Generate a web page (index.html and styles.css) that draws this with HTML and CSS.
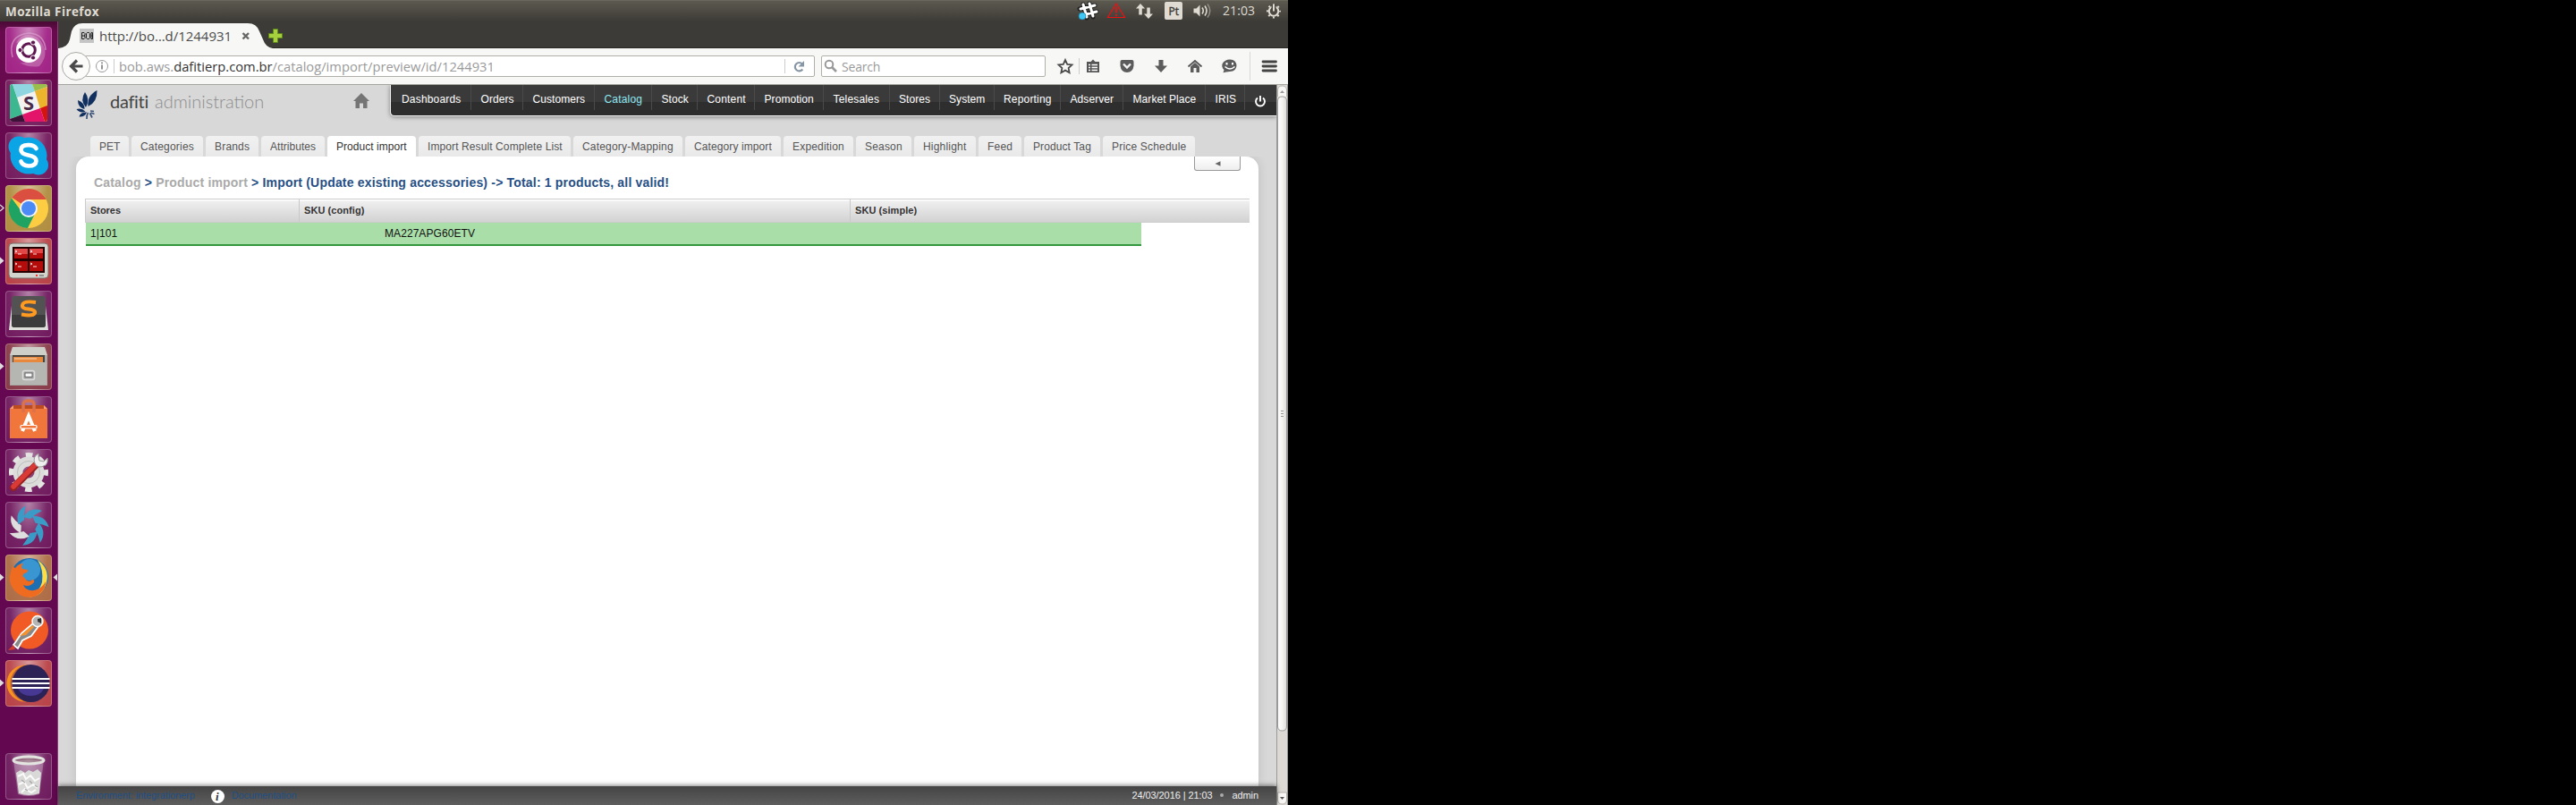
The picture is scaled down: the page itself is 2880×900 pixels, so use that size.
FILE: index.html
```html
<!DOCTYPE html>
<html lang="en">
<head>
<meta charset="utf-8">
<title>Mozilla Firefox</title>
<link rel="stylesheet" href="styles.css">
</head>
<body>
<div class="desktop">
<header class="panel">
  <span class="panel-title">Mozilla Firefox</span>
  <svg class="indicators" width="240" height="24" viewBox="1200 0 240 24">
    <g stroke="#222" stroke-width="5" stroke-linecap="round"><path d="M1211 5l4 15M1218 4l4 15M1207 10l17-4M1209 17l17-4"/></g>
    <g stroke="#fff" stroke-width="3" stroke-linecap="round"><path d="M1211 5l4 14M1218 4l4 14M1208 10l16-4M1210 17l16-4"/></g>
    <circle cx="1210" cy="18" r="4" fill="#3fc8f4" stroke="#1b6f8f" stroke-width=".6"/>
    <path d="M1248 4l9.500 15.500h-19z" fill="none" stroke="#ee1111" stroke-width="1.200"/><path d="M1248 8v6.500M1248 16v2" stroke="#ee1111" stroke-width="1.800"/>
    <path d="M1275 4l-5 5.500h3.300v7h3.500v-7h3.300zM1284 21l-5-5.500h3.300v-7h3.500v7h3.200z" fill="#dfdbd2"/>
    <rect x="1302" y="2" width="20" height="20" rx="2" fill="#dfdbd2"/>
    <text x="1306.500" y="17" class="kbd">Pt</text>
    <path d="M1334.500 9.500h3l4-4v13l-4-4h-3z" fill="#dfdbd2"/>
    <path d="M1344 8.500q2.500 3.500 0 7M1347 6.500q4 5.500 0 11" fill="none" stroke="#dfdbd2" stroke-width="1.600"/><path d="M1350 4.500q5.500 7.500 0 15" fill="none" stroke="#8f8c85" stroke-width="1.500"/>
    <text x="1367" y="17" class="clock" textLength="36">21:03</text>
    <circle cx="1424" cy="12.500" r="5.200" fill="none" stroke="#dfdbd2" stroke-width="2"/>
    <circle cx="1424" cy="12.500" r="7" fill="none" stroke="#dfdbd2" stroke-width="2" stroke-dasharray="2 3.498" stroke-dashoffset="1"/>
    <path d="M1424 4.500v8" stroke="#47453f" stroke-width="5"/><path d="M1424 4.500v8" stroke="#dfdbd2" stroke-width="2"/>
  </svg>
</header>
<div class="screen">
<nav class="launcher">
  <div class="tile t-dash"><svg viewBox="0 0 52 52"><path d="M8 34Q2 10 26 7Q44 8 45 26" fill="none" stroke="#d9a3cb" stroke-opacity=".7" stroke-width="1.500"/><path d="M12 18Q20 4 36 12Q52 28 38 44Q26 46 16 40Q32 42 38 30Q40 12 12 18z" fill="#e6bddb" opacity=".35"/><circle cx="26" cy="26" r="14" fill="#fff"/><circle cx="26" cy="26" r="7.300" fill="none" stroke="#5e1750" stroke-width="3"/><g fill="#5e1750" stroke="#fff"><circle cx="16.500" cy="26" r="2.600"/><circle cx="31" cy="17.500" r="2.600"/><circle cx="31" cy="34.500" r="2.600"/></g></svg></div>
  <div class="tile"><svg viewBox="0 0 52 52"><clipPath id="sl"><rect x="5" y="5" width="42" height="42" rx="3"/></clipPath><g clip-path="url(#sl)"><rect x="5" y="5" width="42" height="42" fill="#f4f2f0"/><path d="M5 5h3l5 15 6 19-14 5z" fill="#3db790"/><path d="M8 5h22l3 8-20 7z" fill="#8fd6e0"/><path d="M30 5h17v3l-14 5z" fill="#9bbd4c"/><path d="M33 13l14-5v22l-8 3z" fill="#ecb32d"/><path d="M19 39l20-7 5 15H22z" fill="#e3156b"/><path d="M39 32l8-3v18h-3z" fill="#d4140f"/><path d="M5 44l14-5 3 8H5z" fill="#3c1238"/></g><text x="26" y="34" class="slack-s">S</text></svg></div>
  <div class="tile"><svg viewBox="0 0 52 52"><g fill="#0ba5e6"><circle cx="15" cy="16" r="11.500"/><circle cx="37" cy="36.500" r="11"/><circle cx="26" cy="26" r="20.500"/></g><path d="M34.500 18Q32 14 25.500 14.200Q17.500 14.500 17.500 19.500Q17.500 24 25.500 25.500Q34.500 27 34.500 32Q34 37.500 26 37.500Q19 37 17.500 32.500" fill="none" stroke="#fff" stroke-width="4.700" stroke-linecap="round"/></svg></div>
  <div class="tile t-chrome"><svg viewBox="0 0 52 52"><circle cx="26" cy="26" r="22" fill="#fccd43"/><path d="M26 26L7.500 14A22 22 0 0 1 45.500 16H26z" fill="#db4f40"/><path d="M7 14.500A22 22 0 0 0 25 48L34 30 26 26 17 28z" fill="#1ea362"/><circle cx="26" cy="26" r="10" fill="#f4f4f4"/><circle cx="26" cy="26" r="8" fill="#4c8bf5"/></svg></div>
  <div class="tile t-red"><svg viewBox="0 0 52 52"><rect x="4" y="6" width="44" height="39" rx="4" fill="#d3d3cd" stroke="#77716b"/><rect x="8" y="10" width="36" height="29" fill="#240000"/><path d="M10 12h15v11H10zM27 12h15v11H27zM10 26h15v11H10zM27 26h15v11H27z" fill="#b40b0b"/><path d="M10 12h15v6H10zM27 12h15v5H27z" fill="#e24747"/><path d="M11 14l2 1-2 1M14 18h4M28 14l2 1-2 1M31 18h4M11 28l2 1-2 1M14 32h4M28 28l2 1-2 1M31 32h4" fill="none" stroke="#fff" stroke-width=".9"/><circle cx="35" cy="42" r="1" fill="red"/><path d="M38 42h5" stroke="#555"/></svg></div>
  <div class="tile"><svg viewBox="0 0 52 52"><path d="M8 8h36l4 36H4z" fill="#dededa"/><rect x="7" y="6" width="38" height="35" rx="3" fill="#525252"/><path d="M7 27h38v11q0 3-3 3H10q-3 0-3-3z" fill="#3c3c3c"/><path d="M34 13Q20 11 19 16Q18 20 26 20.500Q34 21.500 33 25Q31 29 18 26.500" fill="none" stroke="#ff9a20" stroke-width="4"/></svg></div>
  <div class="tile t-files"><svg viewBox="0 0 52 52"><path d="M8 4h36l3 9v34H5V13z" fill="#cfcfca"/><path d="M5 13h42v34H5z" fill="#a9a9a6"/><rect x="8" y="13" width="36" height="9" fill="#4a4440"/><path d="M9 15h33v6H9z" fill="#e8883d"/><path d="M10 17h25" stroke="#f9ddba"/><path d="M6 21h40v25H6z" fill="#b5b5b2"/><rect x="19.500" y="30.500" width="13" height="10" rx="2" fill="#aaa" stroke="#ddd" stroke-width="1.500"/><rect x="22" y="33" width="8" height="4.500" fill="#f7f7f7" stroke="#666"/></svg></div>
  <div class="tile"><svg viewBox="0 0 52 52"><path d="M5 14l4-4h34l4 4z" fill="#bd4b20"/><path d="M5 14h42v33H5z" fill="#f0763b"/><path d="M5 14l4-4v4zM47 14l-4-4v4z" fill="#f7a27a"/><path d="M20 18V9q0-4 6-4t6 4v9" fill="none" stroke="#dc714a" stroke-width="3.500"/><path d="M19 39l7-17 7 17" fill="none" stroke="#fff" stroke-width="4"/><rect x="17" y="32.500" width="18" height="3.500" rx="1" fill="#f0763b" stroke="#fff" stroke-width="1.200"/></svg></div>
  <div class="tile"><svg viewBox="0 0 52 52"><circle cx="26" cy="26" r="19" fill="none" stroke="#e4e4e2" stroke-width="6" stroke-dasharray="7.500 7.420" stroke-dashoffset="3.750"/><circle cx="26" cy="26" r="12" fill="none" stroke="#dcdcda" stroke-width="11"/><circle cx="26" cy="26" r="12.500" fill="none" stroke="#bcbcba" stroke-width="1"/><path d="M9 43L33 19" stroke="#94201f" stroke-width="8" stroke-linecap="round"/><path d="M9 42L33 18" stroke="#d93a36" stroke-width="5.500" stroke-linecap="round"/><path d="M37 5q-7 4-4 11t12 2q3-3 2-8l-4 4-5-1-1-5z" fill="#eee" stroke="#999" stroke-width="1"/></svg></div>
  <div class="tile"><svg viewBox="0 0 52 52"><g fill="#3a9cc6"><path id="blade" d="M20 17Q28 5 41 10Q34 13 28 19Q23 18 20 17z"/><use href="#blade" transform="rotate(52 26 27)"/><use href="#blade" transform="rotate(104 26 27)"/><use href="#blade" transform="rotate(156 26 27)"/></g><g fill="#dedede"><use href="#blade" transform="rotate(208 26 27)"/><use href="#blade" transform="rotate(260 26 27)"/></g><use href="#blade" transform="rotate(310 26 27)" fill="#3a9cc6"/></svg></div>
  <div class="tile t-fox"><svg viewBox="0 0 52 52"><circle cx="27" cy="25" r="21" fill="#1d6fb3"/><circle cx="27" cy="17" r="12" fill="#49abe0" opacity=".65"/><path d="M36 6Q50 16 46 31Q42 47 26 47.500Q38 42 41 31Q43 17 36 6z" fill="#fddc45"/><path d="M8 12q1 3 3 3 4-5 9-5-3 3-1 6l6 1q1 3-4 4l-2 3q3 2 5 5 4 2 6-1 3 0 2 3-5 6-12 3 3 7 12 6 9-2 13-10 0 12-13 17-13 3-22-7-8-10-4-20z" fill="#ee6b20"/></svg></div>
  <div class="tile"><svg viewBox="0 0 52 52"><circle cx="27" cy="25.500" r="21" fill="#f15a24"/><path d="M31 18L18 29l-6 9-3 4 5 4 5-9 10-5 9-12z" fill="#888" stroke="#fff" stroke-width="1.800"/><path d="M30 20L16 32l7-1 9-9z" fill="#f7912f"/><circle cx="36" cy="15.500" r="6" fill="#b5b5b5" stroke="#fff" stroke-width="1.500"/><path d="M36 13l4-1v6l-4-2z" fill="#333"/><path d="M3 48l6-6 2 5z" fill="#d23c2d"/></svg></div>
  <div class="tile t-red"><svg viewBox="0 0 52 52"><circle cx="22" cy="26" r="20.500" fill="#f7931e"/><circle cx="26" cy="26" r="20.500" fill="#b85c3b"/><circle cx="28.500" cy="26" r="21" fill="#2c2255"/><path d="M14 32h29q-4 8-14.500 8T14 32z" fill="#473893"/><path d="M7.500 21h42M7.500 26h42M7.500 31h42" stroke="#fff" stroke-width="2.200"/></svg></div>
  <div class="tile t-trash"><svg viewBox="0 0 52 52"><path d="M9 8l5 38q12 4 24 0l5-38z" fill="#d9c6d6" opacity=".4"/><path d="M12 22l5-3 5 3 4-3 5 2 5-3 4 4-2 23q-12 4-23 0z" fill="#d9d9d7"/><path d="M14 26l6-3 3 6 5-4 5 6 5-3M15 35l6-3 4 7 6-4 5 4M18 44l4-4 7 4 5-3" fill="none" stroke="#fafafa" stroke-width="2"/><path d="M18 30l4 3M27 31l3 3M22 40l3 2M33 36l3 2" stroke="#aaa" stroke-width="1.500"/><ellipse cx="26" cy="8" rx="17" ry="4" fill="#886" fill-opacity=".3" stroke="#e3e3e0" stroke-width="3"/></svg></div>
  <svg class="pips" width="65" height="876" viewBox="0 24 65 876"><path d="M0 229l4 3.500L0 236" fill="none" stroke="#ddd" stroke-width="1.300"/><path d="M0 287.500l4.500 4-4.500 4zM0 405.500l4.500 4-4.500 4zM0 641.500l4.500 4-4.500 4zM64 641.500l-4.500 4 4.500 4zM0 759.500l4.500 4-4.500 4z" fill="#ddd"/></svg>
</nav>
<section class="firefox">
  <div class="tabstrip">
    <svg class="tabshape" width="245" height="30" viewBox="65 24 245 30"><path d="M65 54Q76 53 78 44L80 35Q83 26 92 26H277Q287 26 290 35L294 44Q297 53 305 54z" fill="#f7f7f5"/>
      <rect x="89" y="32" width="16" height="16" fill="#c4c4c4"/><path d="M91.500 36.500v7h2.500l1-1v-2l-1-.5 1-.5v-2l-1-1zM91.500 40h3M97.500 36.500h2l1 1v5l-1 1h-2l-1-1v-5zM102 36.500v7h1.500v-7zM102 40h2" fill="none" stroke="#222"/>
      <path d="M271.500 37l6.500 6.500M278 37l-6.500 6.500" stroke="#666" stroke-width="2.400"/></svg>
    <span class="tabtitle">http://bo…d/1244931</span>
    <svg class="newtab" width="16" height="16" viewBox="0 0 16 16"><path d="M5.500.500h5v5h5v5h-5v5h-5v-5h-5v-5h5z" fill="#a5cf3f" stroke="#5f8a16"/></svg>
  </div>
  <div class="toolbar">
    <div class="urlbar"><span class="url">bob.aws.<b>dafitierp.com.br</b>/catalog/import/preview/id/1244931</span></div>
    <div class="search"><span>Search</span></div>
    <svg class="toolicons" width="1375" height="41" viewBox="65 54 1375 41">
      <circle cx="85" cy="74" r="15.500" fill="#fbfbfa" stroke="#a9a9a3"/>
      <path d="M92.500 74H81M86 67.500L79.500 74l6.500 6.500" fill="none" stroke="#4a4a4a" stroke-width="3.200"/>
      <circle cx="114" cy="74" r="6.500" fill="none" stroke="#999"/><path d="M114 72.500v5M114 69.500v1.800" stroke="#888" stroke-width="1.800"/><path d="M127.500 66v16M877.500 66v16" stroke="#ccc"/>
      <path d="M897 71.500a4.700 4.700 0 1 0 .3 6" fill="none" stroke="#8696a5" stroke-width="2.200"/><path d="M899 68v6.500h-6.500z" fill="#8696a5"/>
      <circle cx="927" cy="72" r="4.300" fill="none" stroke="#999" stroke-width="2"/><path d="M930 75l5 5" stroke="#999" stroke-width="2.600"/>
      <path d="M1191 67l2.200 4.800 5.300.6-3.900 3.600 1 5.200-4.600-2.600-4.600 2.600 1-5.200-3.900-3.600 5.300-.6z" fill="none" stroke="#4a4a4a" stroke-width="1.800"/>
      <path d="M1206.500 65v18" stroke="#ccc"/>
      <path d="M1215 69h4.500l2.500-2.500 2.500 2.500h4.500v12h-14z" fill="#555"/><path d="M1217 72.500h2M1217 75.500h2M1217 78.500h2M1220.500 72.500h6.500M1220.500 75.500h6.500M1220.500 78.500h6.500" stroke="#fff" stroke-width="1.400"/>
      <path d="M1252.500 69q0-2 2-2h11q2 0 2 2v4.500q-1 7.500-7.500 7.500t-7.500-7.500z" fill="#5c5c5c"/><path d="M1256 71.500l4 4 4-4" fill="none" stroke="#f5f5f5" stroke-width="2.300"/>
      <path d="M1295.500 67h5v6.500h4.500l-7 7.500-7-7.500h4.500z" fill="#5c5c5c"/>
      <path d="M1328.500 74.500L1336 68l7.500 6.500" fill="none" stroke="#555" stroke-width="1.800"/><path d="M1331 74.500l5-4.500 5 4.500V81h-3.500v-5h-3v5h-3.500z" fill="#5c5c5c"/>
      <path d="M1375 66.500c10 0 10 13.500 0 13.500l-4 .5-3.500.8 1-3c-5-5-1-11.800 6.500-11.800z" fill="#5c5c5c"/><path d="M1371.500 70v2.500M1378 70v2.500" stroke="#fff" stroke-width="2"/><path d="M1369.500 74.500q5.500 5 11 0" fill="none" stroke="#fff" stroke-width="1.600"/>
      <path d="M1397.500 58v32" stroke="#d8d8d4"/>
      <path d="M1412 69h14.500M1412 74h14.500M1412 79h14.500" stroke="#444" stroke-width="2.800" stroke-linecap="round"/>
    </svg>
  </div>
  <div class="viewport">
    <main class="page">
      <div class="top">
        <svg class="logo" width="30" height="38" viewBox="83 98 30 38"><g fill="#12305f"><path d="M108.500 101Q97 107 98.500 119Q109 114 108.500 101z"/><path d="M95 103Q89 112 96 120Q101 111 95 103z"/><path d="M87 112Q87 120 94.500 122Q95 115 87 112z"/><path d="M85.500 122Q89 127 95.500 124.800Q91 120 85.500 122z"/><path d="M88.500 130.500Q95 131 97 125.500Q90 125 88.500 130.500z"/></g><path d="M97 133q-.5-4 1.500-7M103 131.500l-2.500-5M105.500 127.500l-4-1.500M101 124l4 .5" stroke="#3b5278" stroke-width="1.700" fill="none"/></svg>
        <div class="brand"><span class="b1">dafiti</span><span class="b2">administration</span></div>
        <svg class="home" width="18" height="17" viewBox="0 0 18 17"><path d="M9 0l9 9h-2.500v8h-4.500v-5.500H7V17H2.500V9H0z" fill="#757575"/></svg>
        <nav class="menu"><a class="wide">Dashboards</a><a>Orders</a><a>Customers</a><a class="on wide">Catalog</a><a>Stock</a><a class="wide">Content</a><a>Promotion</a><a class="wide">Telesales</a><a>Stores</a><a>System</a><a class="wide">Reporting</a><a>Adserver</a><a>Market Place</a><a>IRIS</a><svg width="14" height="15" viewBox="0 0 14 15"><path d="M4 3.500a5 5 0 1 0 6 0M7 1v6.500" fill="none" stroke="#fff" stroke-width="1.900"/></svg></nav>
      </div>
      <nav class="tabs"><a class="w43 tight">PET</a><a class="w80">Categories</a><a class="w59">Brands</a><a class="w71 tight">Attributes</a><a class="w99 sel tight">Product import</a><a class="w170 snug">Import Result Complete List</a><a class="w122">Category-Mapping</a><a class="w107 snug">Category import</a><a class="w78">Expedition</a><a class="w62">Season</a><a class="w69">Highlight</a><a class="w48">Feed</a><a class="w85 snug">Product Tag</a><a class="w103">Price Schedule</a></nav>
      <section class="card">
        <div class="collapse"><svg width="7" height="6" viewBox="0 0 7 6"><path d="M6.500.300v5.400L.500 3z" fill="#666"/></svg></div>
        <h1><span>Catalog</span> &gt; <span>Product import</span> &gt; Import (Update existing accessories) -&gt; Total: 1 products, all valid!</h1>
        <div class="thead"><span>Stores</span><span>SKU (config)</span><span>SKU (simple)</span></div>
        <div class="row"><span>1|101</span><span>MA227APG60ETV</span></div>
      </section>
      <footer class="foot"><a>Environment: integrationerp</a><svg width="15" height="15" viewBox="0 0 15 15"><circle cx="7.500" cy="7.500" r="7.500" fill="#fff"/><text x="5" y="12" class="info">i</text></svg><a>Documentation</a><div class="right"><span>24/03/2016 | 21:03</span><i></i><span>admin</span></div></footer>
    </main>
    <div class="scroll"><svg width="13" height="805" viewBox="1427 95 13 805"><defs><linearGradient id="th"><stop offset="0" stop-color="#fff"/><stop offset=".5" stop-color="#f4f3f1"/><stop offset="1" stop-color="#dedbd6"/></linearGradient></defs><path d="M1427.500 95v805M1439.500 95v805" stroke="#999"/><path d="M1428.500 108V101q0-5 5-5t5 5v7" fill="#f8f7f6" stroke="#b5b2ac"/><path d="M1431 104l2.500-3 2.500 3z" fill="#999"/><path d="M1428.500 812V113q0-5 5-5t5 5V812q0 5-5 5t-5-5z" fill="url(#th)" stroke="#999"/><path d="M1432 459.500h3M1432 462.500h3M1432 465.500h3" stroke="#999"/><path d="M1428.500 886h10v8q0 5-5 5t-5-5z" fill="#f8f7f6" stroke="#b5b2ac"/><path d="M1431 891l2.500 3 2.500-3z" fill="#555"/></svg></div>
  </div>
</section>
</div>
</div>
</body>
</html>
```
FILE: styles.css
```css
* { box-sizing: border-box; }
body { margin: 0; background: #000; font-family: "Liberation Sans", Arial, sans-serif; font-size: 12px; }
svg { display: block; flex: none; }
span, a, h1 { white-space: nowrap; }
.desktop { width: 1440px; height: 900px; display: flex; flex-direction: column; overflow: hidden; }
.panel { height: 24px; background: linear-gradient(#5c5950, #3d3b36); border-top: 1px solid #6a675c; display: flex; justify-content: space-between; align-items: center; padding-left: 6px; }
.panel-title { font: bold 13.5px/22px "Open Sans", sans-serif; letter-spacing: .42px; color: #dfdbd2; }
.indicators { margin-top: -1px; }
.kbd { font: 12px "Open Sans", sans-serif; fill: #3c3b37; stroke: #3c3b37; stroke-width: .4px; }
.clock { font: 14px "Open Sans", sans-serif; fill: #dfdbd2; }
.screen { flex: 1; display: flex; min-height: 0; }
.launcher { position: relative; width: 65px; flex: none; background: linear-gradient(#4a0a35, #6a0a4e 12px, #660752 300px, #620850); border-right: 1px solid #913a7c; padding: 6px 0 6px 6px; display: flex; flex-direction: column; gap: 7px; }
.tile { width: 52px; height: 52px; border-radius: 4px; flex: none; border: 1px solid rgba(255,255,255,.25); background: radial-gradient(ellipse at 50% 0, rgba(255,255,255,.5), rgba(255,255,255,.12) 60%, rgba(255,255,255,.08)); }
.tile svg { width: 52px; height: 52px; margin: -1px; }
.t-dash { background-color: #99107b; }
.t-chrome { background-color: #a9832f; }
.t-red { background-color: #b23237; }
.t-files { background-color: #7f2b3a; }
.t-fox { background-color: #a65f35; }
.t-trash { margin-top: auto; }
.pips { position: absolute; left: 0; top: 0; }
.slack-s { font: bold 22px "Open Sans", sans-serif; fill: #4c2a49; text-anchor: middle; }
.firefox { width: 1375px; display: flex; flex-direction: column; }
.tabstrip { position: relative; height: 30px; background: #3c3b37; border-bottom: 1px solid #2a2926; display: flex; align-items: center; }
.tabshape { height: 30px; }
.tabtitle { position: absolute; left: 46px; top: 4px; font: 15px/24px "Open Sans", sans-serif; letter-spacing: -.03px; color: #4c4c4c; }
.newtab { margin: 3px 0 0 -10px; }
.toolbar { position: relative; height: 41px; background: #f7f7f5; border-bottom: 1px solid #a6a6a0; display: flex; padding: 8px 0 0 30px; gap: 7px; }
.toolicons { position: absolute; left: 0; top: 0; }
.urlbar, .search { height: 24px; background: #fff; border: 1px solid #b0b0a8; border-radius: 2px; font: 14px/23px "Open Sans", sans-serif; color: #9a9a9a; }
.urlbar { width: 816px; padding-left: 37px; font-size: 14.7px; letter-spacing: .015px; }
.urlbar b { font-weight: 400; color: #333; }
.search { width: 251px; padding-left: 22px; letter-spacing: -.2px; }
.viewport { flex: 1; display: flex; min-height: 0; }
.page { width: 1362px; background: #d8d8d8; display: flex; flex-direction: column; }
.top { display: flex; height: 57px; padding-left: 18px; }
.logo { margin-top: 3px; }
.brand { margin: 4px 0 0 10px; width: 272px; font: 20px/28px Lato, sans-serif; display: flex; gap: 7px; }
.b1 { color: #444; letter-spacing: -.3px; }
.b2 { color: #8c8c8c; font-weight: 300; }
.home { margin: 9px 23px 0 0; }
.menu { flex: 1; height: 35px; background: linear-gradient(#3a3a3a 0 55%, #2e2e2e 55%); border: 1px solid #f4f4f4; border-width: 0 0 1px 1px; border-radius: 0 0 0 5px; box-shadow: 0 1px 5px rgba(0,0,0,.4); display: grid; grid-template-columns: 90px 58px 80px 64px 51px 64px 77px 73.5px 56px 61px 74.5px 70px 92px 44px 1fr; color: #fff; line-height: 32px; }
.menu a { padding-left: 10.5px; border-right: 1px solid #4a4a4a; height: 28px; letter-spacing: .07px; }
.menu a:first-child { padding-left: 12px; }
.menu a.wide { letter-spacing: .18px; }
.menu a.on { color: #8de8f2; }
.menu svg { margin: 11px 0 0 10px; }
.tabs { display: flex; gap: 3px; padding-left: 36px; height: 23px; letter-spacing: .19px; }
.tabs a { height: 23px; background: linear-gradient(#f1f1f1, #e9e9e9); border-radius: 4px 4px 0 0; line-height: 24px; padding-left: 10px; color: #555; }
.tabs .sel { background: #fff; color: #333; }
.tabs .tight { letter-spacing: .04px; }
.tabs .snug { letter-spacing: .1px; }
.w43 { width: 43px; } .w80 { width: 80px; } .w59 { width: 59px; } .w71 { width: 71px; } .w99 { width: 99px; } .w170 { width: 170px; } .w122 { width: 122px; } .w107 { width: 107px; } .w78 { width: 78px; } .w62 { width: 62px; } .w69 { width: 69px; } .w48 { width: 48px; } .w85 { width: 85px; } .w103 { width: 103px; }
.card { position: relative; flex: 1; margin: 0 20px; background: #fff; border-radius: 14px 14px 0 0; box-shadow: 0 0 12px rgba(0,0,0,.12); clip-path: inset(0 -20px 0 -20px); }
.collapse { position: absolute; right: 20px; top: 0; width: 52px; height: 16px; background: linear-gradient(#fff, #eee); border: 1px solid #999; border-top: 0; border-radius: 0 0 3px 3px; display: flex; align-items: center; justify-content: center; }
h1 { margin: 0; padding: 18px 0 0 20px; font-size: 14px; line-height: 22px; height: 47px; color: #264f85; letter-spacing: .183px; }
h1 span { color: #aaa; }
.thead { margin: 0 10px; height: 27px; border: 1px solid #ccc; border-right: 0; background: linear-gradient(#fff 1px, #efefef 2px, #d2d2d2); display: grid; grid-template-columns: 238px 616px 1fr; font-size: 11px; font-weight: bold; color: #333; line-height: 25px; letter-spacing: .07px; }
.thead span { padding-left: 5px; border-left: 1px solid #c8c8c8; }
.thead span:first-child { border: 0; letter-spacing: -.04px; }
.row { margin: 0 131px 0 11px; height: 26px; background: #aadea9; border-bottom: 2px solid #339740; display: grid; grid-template-columns: 329px 1fr; line-height: 24px; color: #111; padding-left: 5px; letter-spacing: .07px; }
.foot { position: relative; height: 21px; background: linear-gradient(#444, #5e5e5e); box-shadow: 0 -1px 5px rgba(0,0,0,.5); display: flex; align-items: center; padding: 0 20px 1px; font-size: 11px; letter-spacing: -.09px; color: #1e4f86; }
.foot > svg { margin: 3px 8px 0 18px; }
.info { font: italic bold 13px "Liberation Serif", serif; fill: #333; }
.right { margin-left: auto; display: flex; align-items: center; color: #eee; gap: 9px; }
.right i { width: 4px; height: 4px; border-radius: 2px; background: #aaa; }
.scroll { width: 13px; background: #dcd9d5; }
```
